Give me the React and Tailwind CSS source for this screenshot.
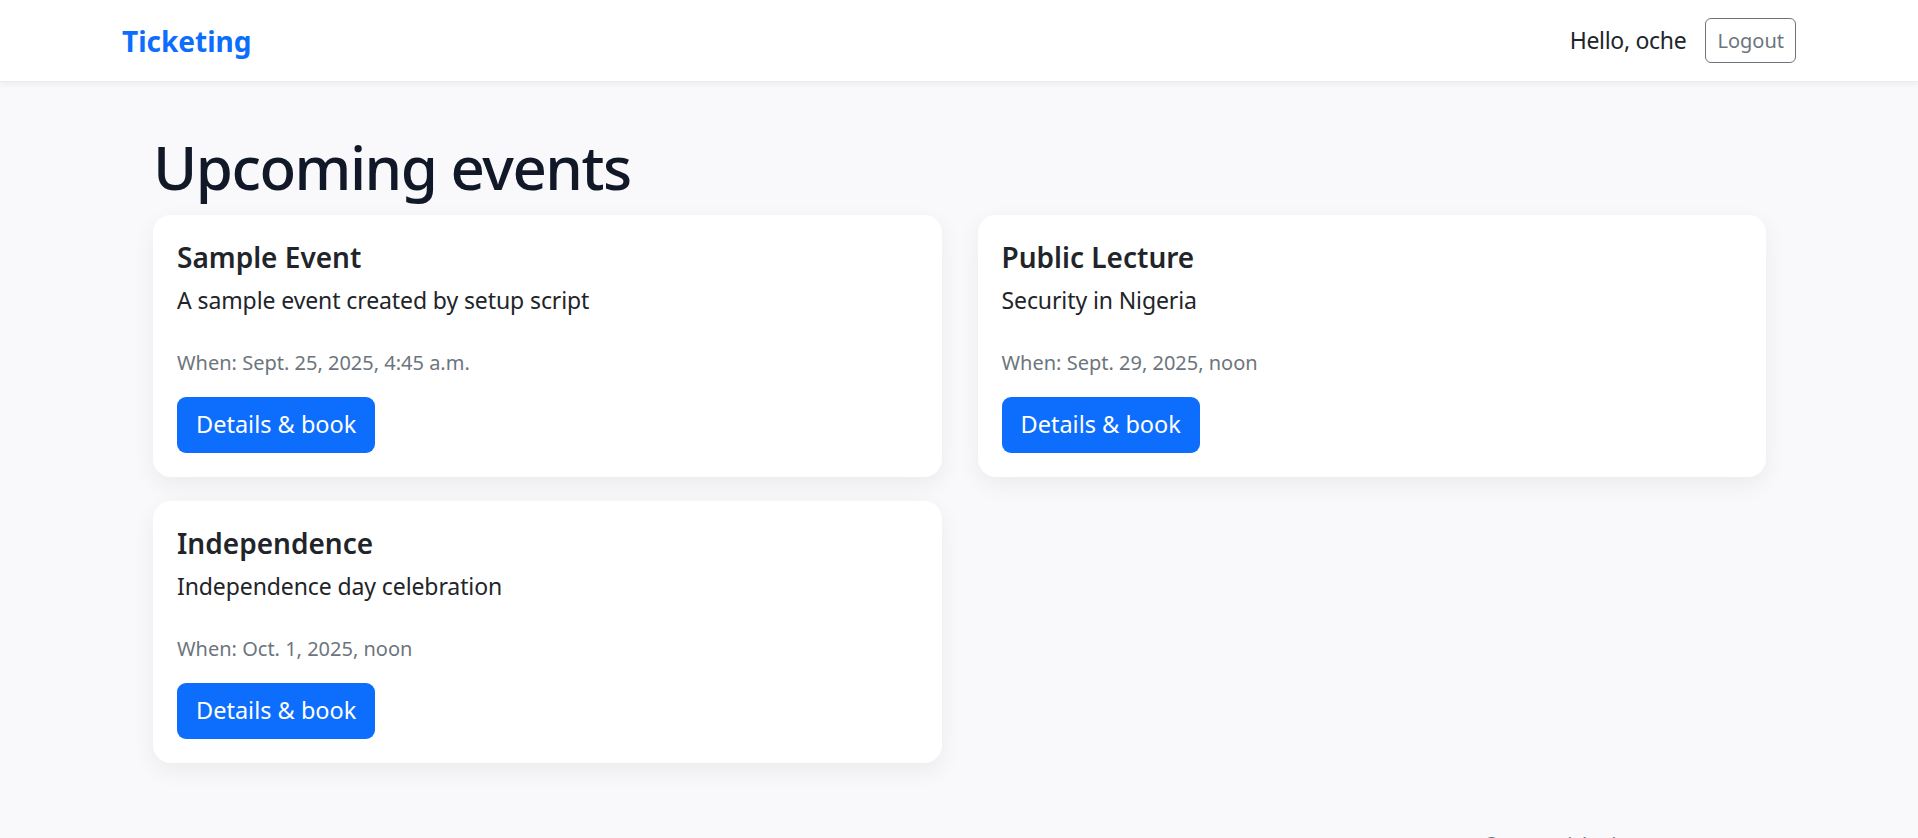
export default function App() {
  const events = [
    { title: "Sample Event", desc: "A sample event created by setup script", when: "When: Sept. 25, 2025, 4:45 a.m." },
    { title: "Public Lecture", desc: "Security in Nigeria", when: "When: Sept. 29, 2025, noon" },
    { title: "Independence", desc: "Independence day celebration", when: "When: Oct. 1, 2025, noon" },
  ];
  return (
    <div className="min-h-screen bg-[#f9f9fb] text-[#212529]" style={{ fontFamily: '"Noto Sans", "Open Sans", sans-serif' }}>
      <nav className="h-[82px] bg-white shadow-[0_2px_6px_rgba(0,0,0,0.06)] border-b border-[#ececef]">
        <div className="mx-auto flex h-full w-[1710px] items-center justify-between px-[18px]">
          <span className="text-[28px] font-bold leading-none text-[#0d6efd]">Ticketing</span>
          <div className="flex items-center gap-[19px]">
            <span className="text-[23px] tracking-[-0.3px] leading-none text-[#212529]">Hello, oche</span>
            <button className="h-[45px] rounded-[6px] border border-[#6c757d] px-[11px] text-[20px] leading-none text-[#6c757d]">Logout</button>
          </div>
        </div>
      </nav>
      <main className="mx-auto w-[1710px] px-[49px] pt-[49px]">
        <h1 className="mb-[12px] text-[60px] font-medium tracking-[-1.5px] leading-[72px] text-[#111827]">Upcoming events</h1>
        <div className="grid grid-cols-2 gap-x-[36px] gap-y-[24px] w-[1613px]">
          {events.map((e) => (
            <div key={e.title} className="rounded-[18px] bg-white p-[24px] shadow-[0_8px_24px_rgba(17,24,39,0.06)]">
              <h5 className="mb-[7px] text-[28px] font-semibold leading-[36px] text-[#212529]">{e.title}</h5>
              <p className="mb-[29px] text-[23px] tracking-[-0.1px] leading-[36px]">{e.desc}</p>
              <p className="mb-[18px] text-[20px] leading-[32px] text-[#6c757d]">{e.when}</p>
              <button className="h-[56px] rounded-[9px] bg-[#0d6efd] px-[19px] text-[23.5px] leading-none text-white">Details &amp; book</button>
            </div>
          ))}
        </div>
        <footer className="mt-[66px] flex justify-end pr-[83px] text-[20px] leading-[32px] text-[#6c757d]">
          <span>© 2025 Ticketing app</span>
        </footer>
      </main>
    </div>
  );
}
